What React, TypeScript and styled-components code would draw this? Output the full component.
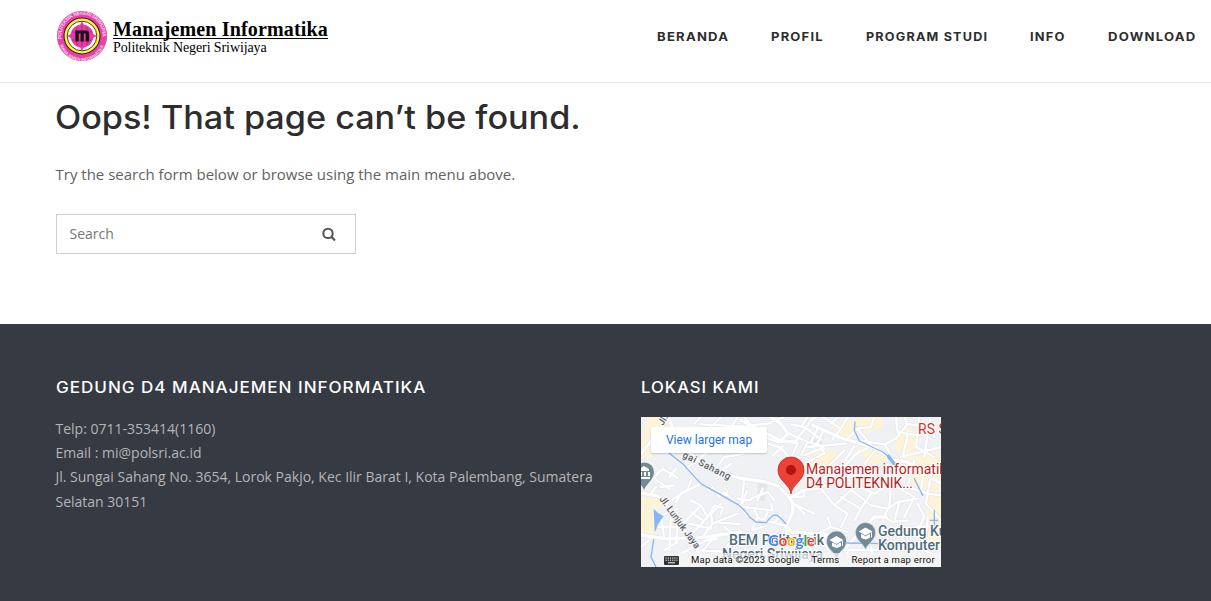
import React from 'react';
import styled, { createGlobalStyle } from 'styled-components';

const GlobalStyle = createGlobalStyle`
  * { box-sizing: border-box; }
  body { margin: 0; background: #fff; font-family: "Open Sans", sans-serif; color: #626262; overflow: hidden; }
`;

const Header = styled.header`
  height: 83px;
  border-bottom: 1px solid #e6e6e6;
  padding: 10px 16px 0 56px;
  display: flex;
  justify-content: space-between;
`;
const Brand = styled.div`
  display: flex;
  align-items: flex-start;
  gap: 5px;
  height: 52px;
`;
const BrandText = styled.div`
  padding-top: 9px;
  font-family: "Liberation Serif", serif;
  color: #000;
  white-space: nowrap;
`;
const BrandName = styled.div`
  width: 215px;
  height: 20px;
  border-bottom: 1px solid #000;
  font-size: 20px;
  line-height: 21px;
  font-weight: 700;
  letter-spacing: 0.16px;
`;
const BrandSub = styled.div`
  font-size: 14px;
  line-height: 18px;
  letter-spacing: -0.1px;
`;
const Nav = styled.nav`
  display: flex;
  gap: 43px;
  padding-top: 18px;
`;
const NavLink = styled.a<{ $w: number; $stretch: number }>`
  width: ${(p) => p.$w}px;
  font: 650 11.700px/18px Inter, sans-serif;
  letter-spacing: 1.1px;
  color: #2d2d2d;
  white-space: nowrap;
  transform: scaleX(${(p) => p.$stretch});
  transform-origin: left;
`;

const Main = styled.main`
  height: 241px;
  padding: 14px 56px 0;
`;
const Title = styled.h1`
  margin: 0 0 0 -1px;
  font: 540 32px/42px Inter, sans-serif;
  height: 42px;
  color: #2d2d2d;
  white-space: nowrap;
  transform: scaleX(1.068);
  transform-origin: left;
`;
const Lead = styled.p`
  margin: 22px 0 0 -0.5px;
  font-size: 15px;
  line-height: 27px;
`;
const SearchForm = styled.form`
  margin-top: 26px;
  width: 300px;
  height: 40px;
  border: 1px solid #d0d0d0;
  display: flex;
  align-items: center;
  justify-content: space-between;
  padding: 0 19px 0 12.5px;
`;
const SearchInput = styled.input`
  border: 0;
  outline: 0;
  padding: 0;
  width: 200px;
  font: 14px/20px "Open Sans", sans-serif;
  &::placeholder { color: #757575; opacity: 1; }
`;

const Footer = styled.footer`
  height: 277px;
  background: #363a43;
  padding: 53px 55.500px 0;
  display: grid;
  grid-template-columns: 546px 300px;
  column-gap: 39.500px;
  align-items: start;
`;
const WidgetTitle = styled.h3<{ $stretch: number }>`
  margin: 0;
  font: 530 15.700px/21px Inter, sans-serif;
  letter-spacing: 0.9px;
  color: #fff;
  white-space: nowrap;
  transform: scaleX(${(p) => p.$stretch});
  transform-origin: left;
`;
const Address = styled.div`
  margin-top: 18.700px;
  font-size: 14px;
  line-height: 24.300px;
  color: #b4b5b8;
`;
const MapFrame = styled.div`
  position: relative;
  width: 300px;
  height: 150px;
  margin-top: 19px;
  overflow: hidden;
  background: #f0f1f3;
  font-family: Roboto, sans-serif;
  svg { display: block; }
`;
const LargerMap = styled.a`
  position: absolute;
  left: 10px;
  top: 10px;
  width: 116px;
  height: 26px;
  background: #fff;
  border-radius: 2px;
  box-shadow: 0 1px 2px rgba(0, 0, 0, 0.2);
  color: #1a73e8;
  font-size: 12px;
  line-height: 26px;
  text-align: center;
`;
const Attribution = styled.div`
  position: absolute;
  right: 0;
  bottom: 0;
  height: 14px;
  padding-right: 6px;
  display: flex;
  align-items: center;
  gap: 12px;
  background: rgba(245, 245, 245, 0.7);
  color: #111;
  font-size: 9.500px;
  letter-spacing: 0.24px;
  line-height: 14px;
  white-space: nowrap;
`;

const Seal = () => (
  <svg width="52" height="52" viewBox="0 0 52 52">
    <defs>
      <path id="sealTop" d="M5.7 29a20.600 20.600 0 1 1 40.600 0" />
      <path id="sealBottom" d="M3 28a23 23 0 0 0 46 0" />
    </defs>
    <circle cx="26" cy="26" r="24.600" fill="#ea3fa8" stroke="#cf5a9d" strokeWidth="1" />
    <g fill="#ffd3ec" fontFamily="Liberation Sans" fontWeight="700" fontSize="5">
      <text><textPath href="#sealTop" textLength="69">POLITEKNIK NEGERI SRIWIJAYA</textPath></text>
      <text fontSize="4.300"><textPath href="#sealBottom" startOffset="7" textLength="57">MANAJEMEN INFORMATIKA</textPath></text>
    </g>
    <circle cx="26" cy="26" r="18" fill="#fff23a" stroke="#30202a" strokeWidth="1.100" />
    <circle cx="26" cy="26" r="14.800" fill="#fff" stroke="#4a3a35" strokeWidth="1" />
    <path d="M26 11l2.500 5h-5zM26 41l2.500-5h-5zM11 26l5-2.500v5zM41 26l-5-2.500v5z" fill="#e93aa5" />
    <circle cx="26" cy="26" r="11.500" fill="#e93aa5" />
    <path d="M16 22h20M16 30h20M26 15.500v21M21.500 17q-5 9 0 18M30.500 17q5 9 0 18" fill="none" stroke="#a02a73" strokeWidth=".8" />
    <path d="M19.500 31.500V20.500H31l2 2v9h-3.300v-8h-1.900v8h-3.200v-8h-1.900v8z" fill="#171014" />
  </svg>
);

const SearchIcon = () => (
  <svg width="14" height="14" viewBox="0 0 14 14" fill="none" stroke="#555">
    <circle cx="6" cy="6.400" r="4.700" strokeWidth="2" />
    <path d="M9.800 10.200l2.500 2.500" strokeWidth="2.300" strokeLinecap="round" />
  </svg>
);

/* Street centre lines, on a 900 x 450 grid. */
const mainRoads = [
  'M0 110C40 60 65 30 82 0',
  'M82 0L110 70L160 120L230 165L300 184L370 194L410 206L440 235L456 260L455 285L437 325L450 345L560 352',
  'M0 228L50 237L75 262L120 330L165 385L180 430',
  'M0 354L70 365L180 362L300 345',
  'M515 24L560 45L610 66L700 92L760 130L800 135L850 170L900 200',
  'M390 0L420 20L440 50L420 72L300 10',
  'M630 450L615 390L700 300L735 300',
];
const sideStreets = [
  'M160 20L180 0M180 22L330 30M210 30L240 0M270 30L290 0',
  'M310 0L330 25L380 20L430 0M325 25L310 50',
  'M370 60L410 75L460 72M420 72L470 78L458 105L440 135',
  'M380 80L420 92L450 128M395 115L425 88',
  'M460 78L510 10L525 0M445 50L500 75L535 85L550 95',
  'M450 22L490 30L540 68M480 30L500 0M530 35L510 75M545 45L528 80',
  'M490 115L540 95L552 108L500 135M500 75L480 115',
  'M545 0L600 35L620 0M600 35L575 65M570 20L590 0',
  'M620 65L650 35L690 30L700 0M650 35L690 85',
  'M655 70L730 82L765 65L800 20L790 0M730 82L745 105',
  'M670 140L710 92M640 115L680 92M615 80L500 90M640 88L600 150L540 175',
  'M560 150L610 100M590 170L655 100',
  'M765 0L770 45L830 55L890 48M795 20L840 28M800 55L785 120M835 0L825 90L880 120M860 50L850 120M865 0L880 60',
  'M780 120L900 90M820 130L800 210L860 230L900 235M850 150L840 220M870 175L855 260L900 310',
  'M200 155L180 120L215 95M220 160L250 120L310 110M240 165L270 140',
  'M180 200L140 150L165 135M180 200L120 230L75 260M140 218L150 190M120 230L105 255',
  'M180 200L260 235L300 270L320 300M210 205L235 240L260 225M310 185L300 270M318 220L305 260M330 245L380 225L400 250M365 215L350 250M290 245L330 250',
  'M310 270L395 280L390 260M340 278L350 300L332 340L380 325M380 285L370 310L430 325L440 350M355 305L400 318L420 292',
  'M0 175L20 200L65 155L110 182M40 185L85 215M85 180L105 155M60 210L100 205M45 210L30 230',
  'M120 325L180 265L200 300L140 365M150 285L185 310M180 265L150 250M200 300L220 265L245 272L240 290',
  'M185 360L215 320L290 290M225 315L295 322M215 320L210 290L240 260M145 320L210 335M250 330L275 350',
  'M50 300L110 275M60 300L70 365M90 285L85 400M50 330L110 330M70 400L110 375M110 330L105 375M0 390L30 365',
  'M165 385L240 350M180 410L210 370L230 365M180 400L260 405M120 410L160 390',
  'M455 260L520 290M450 240L490 220L488 238L455 240M465 265L490 290',
  'M480 220L540 215L570 190L640 175M540 215L580 265L620 290L600 330',
  'M580 265L645 205L700 230M600 240L660 275L640 310M630 218L690 265L740 275L770 255L830 245',
  'M645 205L655 175M690 230L660 275M740 275L730 300L755 315L800 310M775 255L760 315M750 200L745 270M700 230L750 200L820 240L790 300',
  'M520 355L570 330L620 345M450 380L560 360M480 350L510 400M540 355L560 400M570 330L560 300',
  'M830 260L850 300L825 350M825 330L900 330M860 300L850 400L900 420M740 380L760 450M590 450L600 400L900 395M690 390L700 450M825 390L820 450',
  'M250 400L290 345M330 350L310 400M400 350L420 400',
];

const MapPin = ({ x, y }: { x: number; y: number }) => (
  <g transform={`translate(${x} ${y})`}>
    <path d="M0 15c-2-6-10-9-10-17a10 10 0 0 1 20 0c0 8-8 11-10 17z" fill="#718a95" stroke="#dce2e5" strokeWidth=".6" />
    <path d="M-7-3l7-4 7 4-7 4z" fill="#fff" />
    <path d="M-4 0v3q4 3 8 0V0L0 2.300zM6-2v5" fill="#fff" stroke="#fff" strokeWidth="1" />
  </g>
);

const StreetMap = () => (
  <svg width="300" height="150" viewBox="0 0 300 150" fontFamily="Roboto">
    <rect width="300" height="150" fill="#f0f1f4" />
    <g transform="scale(.33333)">
      <path d="M20 0h60l15 30-50 75L0 130V80zM0 240h60l15 20-25 18L0 262zM0 270l40 8 5 75L0 345zM505 105l55-15 30 25-10 45-60 10zM570 30l35-20 45 5-15 60-40-15zM640 10l80-10 10 30-60 20zM635 90l90 5 30 30-60 20zM775 125l120-20 5 120-60-5-60-50zM760 60l30-30 50 20-25 70-50-15zM855 230h45v160h-45z" fill="#fdf3d7" />
      <path d="M350 195l30 5-10 52h-20zM505 60l40 15 0 20-40-5z" fill="#e4e6eb" />
      <g fill="none" strokeLinejoin="round" strokeLinecap="round">
        {sideStreets.map((d) => <path key={d} d={d} stroke="#e0e3e9" strokeWidth="10" />)}
        {mainRoads.map((d) => <path key={d} d={d} stroke="#e0e3e9" strokeWidth="13" />)}
        {sideStreets.map((d) => <path key={d} d={d} stroke="#fff" strokeWidth="7" />)}
        {mainRoads.map((d) => <path key={d} d={d} stroke="#fff" strokeWidth="10" />)}
        <path d="M80 105L125 140L180 200L290 262Q315 282 325 300L345 315L375 317C390 300 400 285 415 300L435 320M642 15L640 40L655 72L725 105L750 125L765 145M820 185L845 235M610 378L740 380L760 388M38 368L30 420L45 450M880 280V345M868 310h22" stroke="#8ab4f8" strokeWidth="4" />
        <path d="M742 118l20 26" stroke="#8ab4f8" strokeWidth="10" />
      </g>
      <path d="M38 275l12 12 18 10-17 25-10 25z" fill="#8ab4f8" />
    </g>
    <g fontWeight="500" fontSize="9.500" fill="#5a6067" stroke="#f4f5f6" strokeWidth="2" paintOrder="stroke">
      <text transform="translate(41 40) rotate(26)" textLength="52">gai Sahang</text>
      <text transform="translate(18 82) rotate(54)" textLength="62">Jl. Lunjuk Jaya</text>
      <text transform="translate(22 9) rotate(-60)">Jl.</text>
    </g>
    <path d="M3 73C1 67-6 63-6 55a9.500 9.500 0 0 1 19 0c0 8-8 12-10 18z" fill="#718a95" />
    <path d="M-2 52l5-3 5 3v2h-10zM-1 55h2v4h-2zM3 55h2v4H3zM7 55h2v4H7zM-2 60h11v2h-11z" fill="#fff" />
    <g fontWeight="500" fill="#4f6d79" stroke="#fff" strokeWidth="2" paintOrder="stroke" fontSize="14">
      <text x="88" y="128" textLength="95" lengthAdjust="spacingAndGlyphs">BEM Politeknik</text>
      <text x="81" y="142" textLength="101" lengthAdjust="spacingAndGlyphs">Negeri Sriwijaya</text>
      <text x="237" y="119" textLength="91" lengthAdjust="spacingAndGlyphs">Gedung Kuliah</text>
      <text x="237" y="133" textLength="62" lengthAdjust="spacingAndGlyphs">Komputer</text>
    </g>
    <MapPin x={195.500} y={126} />
    <MapPin x={224.500} y={117.500} />
    <g fill="#b91c1c" stroke="#fff" strokeWidth="2" paintOrder="stroke" fontSize="14">
      <text x="165" y="57" textLength="148" lengthAdjust="spacingAndGlyphs">Manajemen informatika</text>
      <text x="165" y="71" textLength="107">D4 POLITEKNIK...</text>
      <text x="277" y="17" fill="#d93025">RS Siti</text>
    </g>
    <path d="M150 77c-1-10-13-13-13-24a13 13 0 0 1 26 0c0 11-12 14-13 24z" fill="#ea4335" stroke="#c5221f" strokeWidth=".8" />
    <circle cx="150" cy="53" r="5" fill="#b31412" />
    <text x="127" y="128.500" fontFamily="Lato" fontSize="15.500" fontWeight="700" stroke="#fff" strokeWidth="1.500" paintOrder="stroke" textLength="47" lengthAdjust="spacingAndGlyphs">
      <tspan fill="#4285f4">G</tspan><tspan fill="#ea4335">o</tspan><tspan fill="#fbbc04">o</tspan><tspan fill="#4285f4">g</tspan><tspan fill="#34a853">l</tspan><tspan fill="#ea4335">e</tspan>
    </text>
  </svg>
);

const KeyboardIcon = () => (
  <svg width="15" height="9" viewBox="0 0 15 9">
    <rect width="15" height="9" rx="1" fill="#333" />
    <path d="M1.500 2h12M1.500 4.200h12" stroke="#fff" strokeDasharray="1.200 1" />
    <path d="M4 6.800h7" stroke="#fff" />
  </svg>
);

export default function App() {
  return (
    <>
      <GlobalStyle />
      <Header>
        <Brand>
          <Seal />
          <BrandText>
            <BrandName>Manajemen Informatika</BrandName>
            <BrandSub>Politeknik Negeri Sriwijaya</BrandSub>
          </BrandText>
        </Brand>
        <Nav>
          <NavLink $w={71} $stretch={1.12}>BERANDA</NavLink>
          <NavLink $w={52} $stretch={1.11}>PROFIL</NavLink>
          <NavLink $w={121} $stretch={1.08}>PROGRAM STUDI</NavLink>
          <NavLink $w={35} $stretch={1.1}>INFO</NavLink>
          <NavLink $w={87} $stretch={1.12}>DOWNLOAD</NavLink>
        </Nav>
      </Header>
      <Main>
        <Title>Oops! That page can’t be found.</Title>
        <Lead>Try the search form below or browse using the main menu above.</Lead>
        <SearchForm>
          <SearchInput placeholder="Search" />
          <SearchIcon />
        </SearchForm>
      </Main>
      <Footer>
        <section>
          <WidgetTitle $stretch={1.088}>GEDUNG D4 MANAJEMEN INFORMATIKA</WidgetTitle>
          <Address>
            Telp: 0711-353414(1160)<br />
            Email : mi@polsri.ac.id<br />
            Jl. Sungai Sahang No. 3654, Lorok Pakjo, Kec Ilir Barat I, Kota Palembang, Sumatera Selatan 30151
          </Address>
        </section>
        <section>
          <WidgetTitle $stretch={1.065}>LOKASI KAMI</WidgetTitle>
          <MapFrame>
            <StreetMap />
            <LargerMap>View larger map</LargerMap>
            <Attribution>
              <KeyboardIcon />
              <span>Map data ©2023 Google</span>
              <span>Terms</span>
              <span>Report a map error</span>
            </Attribution>
          </MapFrame>
        </section>
      </Footer>
    </>
  );
}
